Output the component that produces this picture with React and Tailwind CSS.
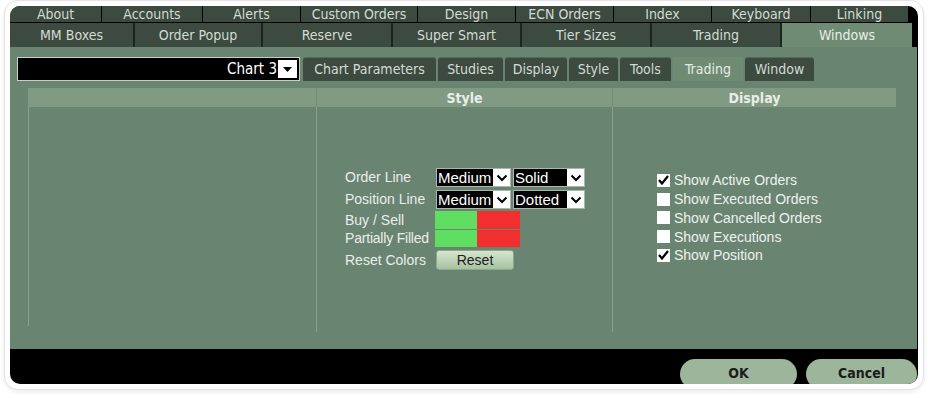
const tabFont = { fontFamily: '"DejaVu Sans Condensed", "DejaVu Sans", sans-serif' };

const row1 = [
  ["About", "w-[92px]"],
  ["Accounts", "w-[101px]"],
  ["Alerts", "w-[98px]"],
  ["Custom Orders", "w-[117px]"],
  ["Design", "w-[98px]"],
  ["ECN Orders", "w-[98px]"],
  ["Index", "w-[98px]"],
  ["Keyboard", "w-[99px]"],
  ["Linking", "w-[98px]"],
];

const row2 = [
  ["MM Boxes", "w-[125px]", false],
  ["Order Popup", "w-[128px]", false],
  ["Reserve", "w-[130px]", false],
  ["Super Smart", "w-[129px]", false],
  ["Tier Sizes", "w-[130px]", false],
  ["Trading", "w-[130px]", false],
  ["Windows", "w-[130px]", true],
];

const subTabs = [
  ["Chart Parameters", "w-[133px]", false],
  ["Studies", "w-[65px]", false],
  ["Display", "w-[62px]", false],
  ["Style", "w-[49px]", false],
  ["Tools", "w-[51px]", false],
  ["Trading", "w-[70px]", true],
  ["Window", "w-[69px]", false],
];

const checks = [
  ["Show Active Orders", true],
  ["Show Executed Orders", false],
  ["Show Cancelled Orders", false],
  ["Show Executions", false],
  ["Show Position", true],
];

function Chevron() {
  return (
    <svg width="12" height="8" viewBox="0 0 12 8">
      <path d="M1.5 1.5 L6 6 L10.5 1.5" fill="none" stroke="#000" strokeWidth="2" />
    </svg>
  );
}

function Select({ value, wClass }) {
  return (
    <div className={`${wClass} h-[19px] flex bg-black border border-[#aab6ac]`}>
      <div className="flex-1 flex items-center pl-[1px] text-white text-[15px] leading-none overflow-hidden whitespace-nowrap">
        {value}
      </div>
      <div className="w-[17px] bg-white flex items-center justify-center">
        <Chevron />
      </div>
    </div>
  );
}

export default function App() {
  return (
    <div className="w-[928px] h-[398px] bg-white overflow-hidden pl-[4px]">
      <div className="w-[920px] h-[390px] rounded-[14px] border border-[#e4e4e4] shadow-[0_2px_4px_rgba(0,0,0,0.08)] p-[5px] bg-white">
        <div className="w-[908px] h-[378px] rounded-[10px] bg-black overflow-hidden flex flex-col">
          {/* Row 1 tabs */}
          <div className="flex h-[16px] shrink-0" style={tabFont}>
            {row1.map(([t, w]) => (
              <div
                key={t}
                className={`${w} h-full bg-[#3c4a40] border-r border-black flex items-center justify-center text-[14px] leading-[16px] text-[#d3dbd3] whitespace-nowrap`}
              >
                {t}
              </div>
            ))}
          </div>
          {/* Row 2 tabs */}
          <div className="flex h-[24px] mt-[1px] shrink-0" style={tabFont}>
            {row2.map(([t, w, sel]) => (
              <div
                key={t}
                className={`${w} h-full flex items-center justify-center text-[14px] whitespace-nowrap ${
                  sel
                    ? "bg-[#6f8b74] text-[#e9efe9]"
                    : "bg-[#3c4a40] text-[#d3dbd3] border-r-2 border-[#1d241f]"
                }`}
              >
                {t}
              </div>
            ))}
          </div>
          {/* Body */}
          <div className="h-[302px] shrink-0 mr-[1px] bg-[#6a8472] pt-[10px] pl-[7px] flex flex-col">
            <div className="flex h-[24px] gap-[3px]">
              <div className="w-[283px] h-full bg-black border border-[#c9cec9] flex items-center justify-end pr-[2px]">
                <span className="text-white text-[15px] leading-none mr-[1px]" style={tabFont}>
                  Chart 3
                </span>
                <div className="w-[19px] h-[18px] bg-white flex items-center justify-center">
                  <svg width="9" height="5" viewBox="0 0 9 5">
                    <path d="M0 0 L9 0 L4.5 5 Z" fill="#000" />
                  </svg>
                </div>
              </div>
              <div className="flex gap-[2px] h-full" style={tabFont}>
                {subTabs.map(([t, w, sel]) => (
                  <div
                    key={t}
                    className={`${w} h-full rounded-t-[3px] flex items-center justify-center text-[14px] whitespace-nowrap ${
                      sel
                        ? "bg-[#6f8b74] text-[#e4ebe4]"
                        : "bg-[#3c4a40] text-[#d3dbd3] border-t border-[#56665a]"
                    }`}
                  >
                    {t}
                  </div>
                ))}
              </div>
            </div>

            {/* Header */}
            <div
              className="ml-[11px] mt-[7px] w-[868px] h-[19px] bg-[#819a83] grid grid-cols-[288px_296px_284px] text-[14px] font-bold text-[#e8eee8]"
              style={tabFont}
            >
              <div></div>
              <div className="border-l border-[#738c76] flex items-center justify-center">Style</div>
              <div className="border-l border-[#738c76] flex items-center justify-center">Display</div>
            </div>

            {/* Columns */}
            <div
              className="ml-[11px] w-[868px] h-[225px] grid grid-cols-[288px_296px_284px]"
              style={{ fontFamily: '"Liberation Sans", Arial, sans-serif' }}
            >
              <div className="h-[219px] border-l border-[#8aa38d]"></div>
              <div className="border-l border-[#8aa38d] pl-[28px] pt-[61px] text-[14px] text-[#e9eee9]">
                <div className="flex items-center h-[19px]">
                  <div className="w-[91px] whitespace-nowrap">Order Line</div>
                  <div className="flex gap-[2px]">
                    <Select value="Medium" wClass="w-[75px]" />
                    <Select value="Solid" wClass="w-[72px]" />
                  </div>
                </div>
                <div className="flex items-center h-[19px] mt-[3px]">
                  <div className="w-[91px] whitespace-nowrap">Position Line</div>
                  <div className="flex gap-[2px]">
                    <Select value="Medium" wClass="w-[75px]" />
                    <Select value="Dotted" wClass="w-[72px]" />
                  </div>
                </div>
                <div className="flex items-center h-[18px] mt-[2px]">
                  <div className="w-[90px] whitespace-nowrap">Buy / Sell</div>
                  <div className="w-[42px] h-[18px] bg-[#5fde62]"></div>
                  <div className="w-[43px] h-[18px] bg-[#f22f2f]"></div>
                </div>
                <div className="flex items-center h-[18px]">
                  <div className="w-[90px] whitespace-nowrap tracking-[-0.2px]">Partially Filled</div>
                  <div className="w-[42px] h-[17px] bg-[#5fde62]"></div>
                  <div className="w-[43px] h-[17px] bg-[#f22f2f]"></div>
                </div>
                <div className="flex items-center h-[20px] mt-[3px]">
                  <div className="w-[91px] whitespace-nowrap">Reset Colors</div>
                  <div className="w-[78px] h-[20px] rounded-[3px] border border-[#8ea88c] bg-gradient-to-b from-[#d6e6ce] to-[#a7c2a2] flex items-center justify-center text-[#1d1d1d] text-[14px]">
                    Reset
                  </div>
                </div>
              </div>
              <div className="border-l border-[#8aa38d] pl-[44px] pt-[64px] text-[14px] text-[#eef2ee]">
                {checks.map(([t, c]) => (
                  <div key={t} className="flex items-center h-[18.75px]">
                    <div className="w-[13px] h-[13px] bg-white flex items-center justify-center">
                      {c && (
                        <svg width="11" height="10" viewBox="0 0 11 10">
                          <path d="M1 5 L4 8.5 L10 1" fill="none" stroke="#000" strokeWidth="2.2" />
                        </svg>
                      )}
                    </div>
                    <span className="ml-[4px] leading-none whitespace-nowrap">{t}</span>
                  </div>
                ))}
              </div>
            </div>
          </div>
          {/* Footer */}
          <div className="h-[35px] shrink-0 flex justify-end pt-[10px] pr-[1px] gap-[9px]" style={tabFont}>
            <div className="w-[117px] h-[30px] shrink-0 rounded-full bg-[#9cb59b] flex items-start justify-center pt-[4px] text-[14px] font-bold text-[#1b1b1b]">
              OK
            </div>
            <div className="w-[111px] h-[30px] shrink-0 rounded-full bg-[#9cb59b] flex items-start justify-center pt-[4px] text-[14px] font-bold text-[#1b1b1b]">
              Cancel
            </div>
          </div>
        </div>
      </div>
    </div>
  );
}
